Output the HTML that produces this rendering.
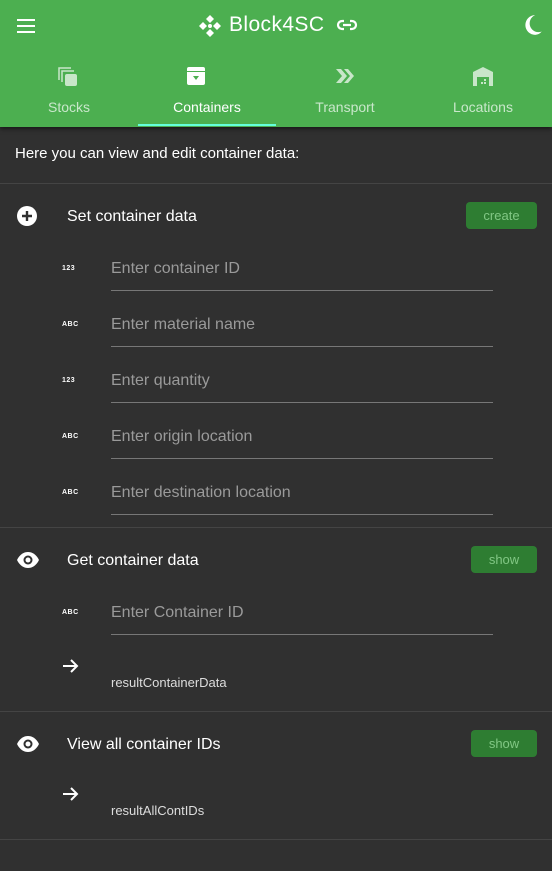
<!DOCTYPE html>
<html><head><meta charset="utf-8"><style>
*{box-sizing:border-box;margin:0;padding:0}
body{width:552px;height:871px;background:#303030;font-family:"Liberation Sans","DejaVu Sans",sans-serif;color:#fff;overflow:hidden;position:relative}
.hdr{position:absolute;left:0;top:0;width:552px;height:127px;background:#4caf50;box-shadow:0 2px 4px rgba(0,0,0,.5)}
.abs{position:absolute}
.tab{position:absolute;top:99px;width:138px;text-align:center;font-size:14px;color:rgba(255,255,255,.7)}
.ind{position:absolute;left:138px;top:124px;width:138px;height:2px;background:#64ffda}
.div{position:absolute;left:0;width:552px;height:1px;background:#444}
.title{position:absolute;left:67px;font-size:16px;color:#fff}
.btn{position:absolute;left:466px;width:71px;height:27px;background:#2e7d32;border-radius:4px;color:#81c784;font-size:13px;text-align:center;line-height:27px}
.lbl{position:absolute;left:111px;font-size:16px;color:#9a9a9a}
.line{position:absolute;left:111px;width:382px;height:1px;background:#777}
.mi{position:absolute;left:62px;font-size:7px;font-weight:bold;color:#fff;letter-spacing:.5px}
.res{position:absolute;left:111px;font-size:13px;color:#ddd}
</style></head><body>
<div class="hdr">
  <svg class="abs" style="left:17px;top:18px" width="20" height="16" viewBox="0 0 20 16"><rect y="1" width="18" height="2" fill="#fff"/><rect y="7" width="18" height="2" fill="#fff"/><rect y="13" width="18" height="2" fill="#fff"/></svg>
  <svg class="abs" style="left:198px;top:14px" width="24" height="24" viewBox="0 0 24 24"><g fill="#fff"><path d="M12 1l4 4-4 4-4-4z"/><path d="M12 15l4 4-4 4-4-4z"/><path d="M1 12l4-4 4 4-4 4z"/><path d="M15 12l4-4 4 4-4 4z"/></g><circle cx="12" cy="12" r="2" fill="#fff"/></svg>
  <div class="abs" style="left:229px;top:13px;font-size:21px;color:#fff;letter-spacing:.4px">Block4SC</div>
  <svg class="abs" style="left:336px;top:17px" width="22" height="16" viewBox="0 0 22 16"><path d="M8 4H6a4 4 0 000 8h2M14 4h2a4 4 0 010 8h-2M7 8h8" stroke="#fff" stroke-width="2.2" fill="none"/></svg>
  <svg class="abs" style="left:521px;top:13px" width="24" height="24" viewBox="0 0 22 22"><path d="M13 2a9 9 0 100 18 8 8 0 006-3A8 8 0 0113 2z" fill="#fff"/></svg>
  <svg class="abs" style="left:57px;top:66px" width="22" height="22" viewBox="0 0 22 22"><g fill="none" stroke="#c8e6c9" stroke-width="1.5"><path d="M2 14V2h12"/><path d="M5 16V5h12"/></g><rect x="8" y="8" width="12" height="12" rx="2" fill="#c8e6c9"/></svg>
  <svg class="abs" style="left:186px;top:66px" width="20" height="20" viewBox="0 0 20 20"><rect x="1" y="1" width="18" height="18" rx="2" fill="#fff"/><rect x="1" y="5" width="18" height="1" fill="#4caf50"/><path d="M7 10h6l-3 4z" fill="#4caf50"/></svg>
  <svg class="abs" style="left:335px;top:68px" width="20" height="16" viewBox="0 0 20 16"><path d="M1 1h5l6 7-6 7H1l6-7zM9 1h4l6 7-6 7H9l6-7z" fill="#c8e6c9"/></svg>
  <svg class="abs" style="left:472px;top:66px" width="22" height="20" viewBox="0 0 22 20"><path d="M1 20V6l10-5 10 5v14h-4v-9H5v9z" fill="#c8e6c9"/><rect x="9" y="16" width="2" height="2" fill="#c8e6c9"/><rect x="12" y="16" width="2" height="2" fill="#c8e6c9"/><rect x="12" y="13" width="2" height="2" fill="#c8e6c9"/></svg>
  <div class="tab" style="left:0">Stocks</div>
  <div class="tab" style="left:138px;color:#fff">Containers</div>
  <div class="tab" style="left:276px">Transport</div>
  <div class="tab" style="left:414px">Locations</div>
  <div class="ind"></div>
</div>
<div class="abs" style="left:15px;top:145px;font-size:15px;color:#fff">Here you can view and edit container data:</div>
<div class="div" style="top:183px"></div>
<svg class="abs" style="left:17px;top:206px" width="20" height="20" viewBox="0 0 20 20"><circle cx="10" cy="10" r="10" fill="#fff"/><path d="M10 5v10M5 10h10" stroke="#303030" stroke-width="2.4"/></svg>
<div class="title" style="top:208px">Set container data</div>
<div class="btn" style="top:202px">create</div>
<div class="mi" style="top:265px">123</div><div class="lbl" style="top:260px">Enter container ID</div><div class="line" style="top:290px"></div>
<div class="mi" style="top:321px">ABC</div><div class="lbl" style="top:316px">Enter material name</div><div class="line" style="top:346px"></div>
<div class="mi" style="top:377px">123</div><div class="lbl" style="top:372px">Enter quantity</div><div class="line" style="top:402px"></div>
<div class="mi" style="top:433px">ABC</div><div class="lbl" style="top:428px">Enter origin location</div><div class="line" style="top:458px"></div>
<div class="mi" style="top:489px">ABC</div><div class="lbl" style="top:484px">Enter destination location</div><div class="line" style="top:514px"></div>
<div class="div" style="top:527px"></div>
<svg class="abs" style="left:16px;top:552px" width="24" height="16" viewBox="0 0 24 16"><path d="M1 8C4 2 8 0 12 0s8 2 11 8c-3 6-7 8-11 8S4 14 1 8z" fill="#fff"/><circle cx="12" cy="8" r="4.5" fill="#303030"/><circle cx="12" cy="8" r="2.5" fill="#fff"/></svg>
<div class="title" style="top:552px">Get container data</div>
<div class="btn" style="top:546px;left:471px;width:66px">show</div>
<div class="mi" style="top:609px">ABC</div><div class="lbl" style="top:604px">Enter Container ID</div><div class="line" style="top:634px"></div>
<svg class="abs" style="left:62px;top:658px" width="18" height="16" viewBox="0 0 18 16"><path d="M1 8h14M9 2l6 6-6 6" stroke="#fff" stroke-width="2" fill="none"/></svg>
<div class="res" style="top:675px">resultContainerData</div>
<div class="div" style="top:711px"></div>
<svg class="abs" style="left:16px;top:736px" width="24" height="16" viewBox="0 0 24 16"><path d="M1 8C4 2 8 0 12 0s8 2 11 8c-3 6-7 8-11 8S4 14 1 8z" fill="#fff"/><circle cx="12" cy="8" r="4.5" fill="#303030"/><circle cx="12" cy="8" r="2.5" fill="#fff"/></svg>
<div class="title" style="top:736px">View all container IDs</div>
<div class="btn" style="top:730px;left:471px;width:66px">show</div>
<svg class="abs" style="left:62px;top:786px" width="18" height="16" viewBox="0 0 18 16"><path d="M1 8h14M9 2l6 6-6 6" stroke="#fff" stroke-width="2" fill="none"/></svg>
<div class="res" style="top:803px">resultAllContIDs</div>
<div class="div" style="top:839px"></div>
</body></html>
